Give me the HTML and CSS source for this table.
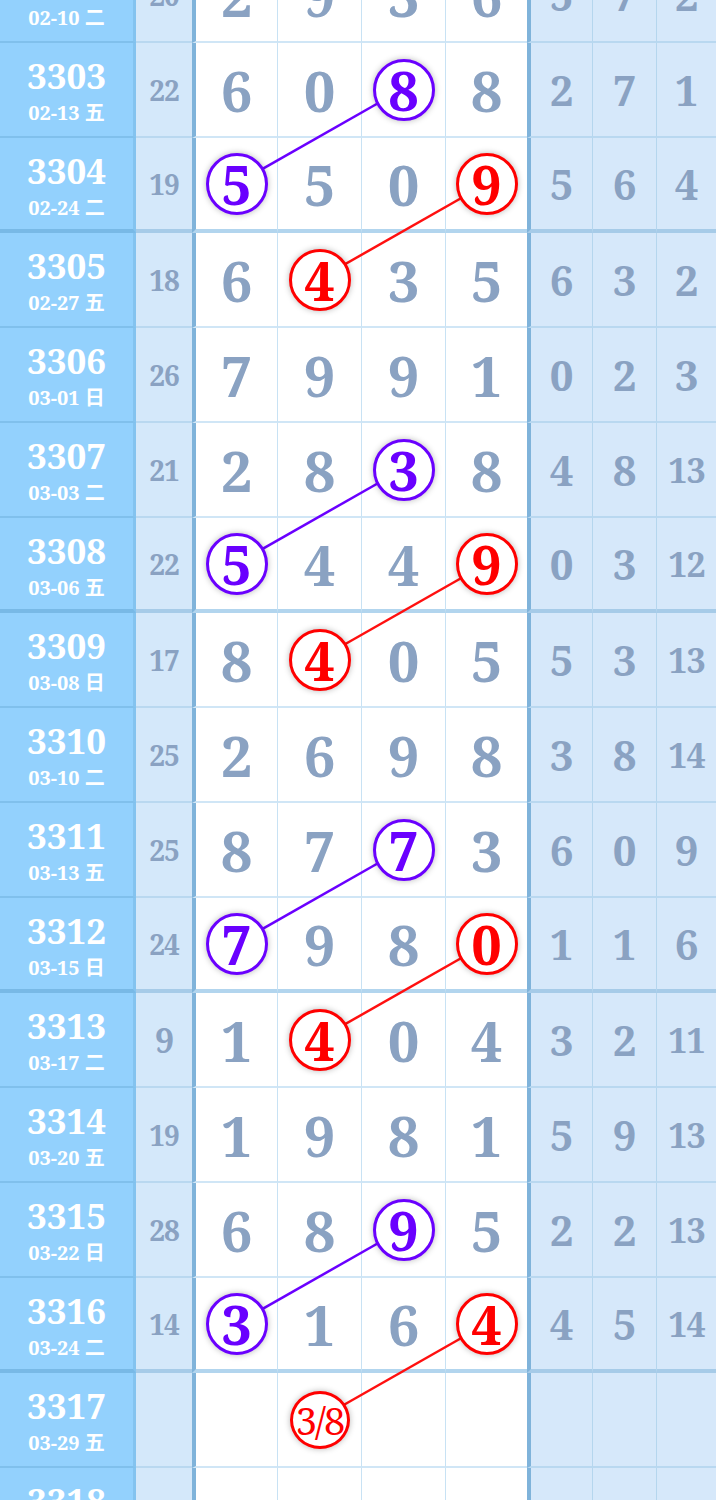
FILE: index.html
```html
<!DOCTYPE html>
<html lang="zh">
<head>
<meta charset="utf-8">
<title>走势图</title>
<link rel="stylesheet" href="styles.css">
</head>
<body>
<div class="chart">
  <svg class="links" width="716" height="1615" viewBox="0 0 716 1615">
    <line class="lp" x1="403" y1="141" x2="236" y2="236"/>
    <line class="lr" x1="486" y1="236" x2="319" y2="331"/>
    <line class="lp" x1="403" y1="521" x2="236" y2="616"/>
    <line class="lr" x1="486" y1="616" x2="319" y2="711"/>
    <line class="lp" x1="403" y1="901" x2="236" y2="996"/>
    <line class="lr" x1="486" y1="996" x2="319" y2="1091"/>
    <line class="lp" x1="403" y1="1281" x2="236" y2="1376"/>
    <line class="lr" x1="486" y1="1376" x2="319" y2="1471"/>
  </svg>

  <div class="row">
    <div class="c-id"><span class="id">3302</span><span class="date">02-10 二</span></div>
    <div class="c-sum">20</div>
    <div class="c-n c1">2</div><div class="c-n">9</div><div class="c-n">3</div><div class="c-n">6</div>
    <div class="c-d d1">5</div><div class="c-d">7</div><div class="c-d">2</div>
  </div>
  <div class="row">
    <div class="c-id"><span class="id">3303</span><span class="date">02-13 五</span></div>
    <div class="c-sum">22</div>
    <div class="c-n c1">6</div><div class="c-n">0</div><div class="c-n"><span class="ball purple">8</span></div><div class="c-n">8</div>
    <div class="c-d d1">2</div><div class="c-d">7</div><div class="c-d">1</div>
  </div>
  <div class="row group-end">
    <div class="c-id"><span class="id">3304</span><span class="date">02-24 二</span></div>
    <div class="c-sum">19</div>
    <div class="c-n c1"><span class="ball purple">5</span></div><div class="c-n">5</div><div class="c-n">0</div><div class="c-n"><span class="ball red">9</span></div>
    <div class="c-d d1">5</div><div class="c-d">6</div><div class="c-d">4</div>
  </div>
  <div class="row">
    <div class="c-id"><span class="id">3305</span><span class="date">02-27 五</span></div>
    <div class="c-sum">18</div>
    <div class="c-n c1">6</div><div class="c-n"><span class="ball red">4</span></div><div class="c-n">3</div><div class="c-n">5</div>
    <div class="c-d d1">6</div><div class="c-d">3</div><div class="c-d">2</div>
  </div>
  <div class="row">
    <div class="c-id"><span class="id">3306</span><span class="date">03-01 日</span></div>
    <div class="c-sum">26</div>
    <div class="c-n c1">7</div><div class="c-n">9</div><div class="c-n">9</div><div class="c-n">1</div>
    <div class="c-d d1">0</div><div class="c-d">2</div><div class="c-d">3</div>
  </div>
  <div class="row">
    <div class="c-id"><span class="id">3307</span><span class="date">03-03 二</span></div>
    <div class="c-sum">21</div>
    <div class="c-n c1">2</div><div class="c-n">8</div><div class="c-n"><span class="ball purple">3</span></div><div class="c-n">8</div>
    <div class="c-d d1">4</div><div class="c-d">8</div><div class="c-d two">13</div>
  </div>
  <div class="row group-end">
    <div class="c-id"><span class="id">3308</span><span class="date">03-06 五</span></div>
    <div class="c-sum">22</div>
    <div class="c-n c1"><span class="ball purple">5</span></div><div class="c-n">4</div><div class="c-n">4</div><div class="c-n"><span class="ball red">9</span></div>
    <div class="c-d d1">0</div><div class="c-d">3</div><div class="c-d two">12</div>
  </div>
  <div class="row">
    <div class="c-id"><span class="id">3309</span><span class="date">03-08 日</span></div>
    <div class="c-sum">17</div>
    <div class="c-n c1">8</div><div class="c-n"><span class="ball red">4</span></div><div class="c-n">0</div><div class="c-n">5</div>
    <div class="c-d d1">5</div><div class="c-d">3</div><div class="c-d two">13</div>
  </div>
  <div class="row">
    <div class="c-id"><span class="id">3310</span><span class="date">03-10 二</span></div>
    <div class="c-sum">25</div>
    <div class="c-n c1">2</div><div class="c-n">6</div><div class="c-n">9</div><div class="c-n">8</div>
    <div class="c-d d1">3</div><div class="c-d">8</div><div class="c-d two">14</div>
  </div>
  <div class="row">
    <div class="c-id"><span class="id">3311</span><span class="date">03-13 五</span></div>
    <div class="c-sum">25</div>
    <div class="c-n c1">8</div><div class="c-n">7</div><div class="c-n"><span class="ball purple">7</span></div><div class="c-n">3</div>
    <div class="c-d d1">6</div><div class="c-d">0</div><div class="c-d">9</div>
  </div>
  <div class="row group-end">
    <div class="c-id"><span class="id">3312</span><span class="date">03-15 日</span></div>
    <div class="c-sum">24</div>
    <div class="c-n c1"><span class="ball purple">7</span></div><div class="c-n">9</div><div class="c-n">8</div><div class="c-n"><span class="ball red">0</span></div>
    <div class="c-d d1">1</div><div class="c-d">1</div><div class="c-d">6</div>
  </div>
  <div class="row">
    <div class="c-id"><span class="id">3313</span><span class="date">03-17 二</span></div>
    <div class="c-sum one">9</div>
    <div class="c-n c1">1</div><div class="c-n"><span class="ball red">4</span></div><div class="c-n">0</div><div class="c-n">4</div>
    <div class="c-d d1">3</div><div class="c-d">2</div><div class="c-d two">11</div>
  </div>
  <div class="row">
    <div class="c-id"><span class="id">3314</span><span class="date">03-20 五</span></div>
    <div class="c-sum">19</div>
    <div class="c-n c1">1</div><div class="c-n">9</div><div class="c-n">8</div><div class="c-n">1</div>
    <div class="c-d d1">5</div><div class="c-d">9</div><div class="c-d two">13</div>
  </div>
  <div class="row">
    <div class="c-id"><span class="id">3315</span><span class="date">03-22 日</span></div>
    <div class="c-sum">28</div>
    <div class="c-n c1">6</div><div class="c-n">8</div><div class="c-n"><span class="ball purple">9</span></div><div class="c-n">5</div>
    <div class="c-d d1">2</div><div class="c-d">2</div><div class="c-d two">13</div>
  </div>
  <div class="row group-end">
    <div class="c-id"><span class="id">3316</span><span class="date">03-24 二</span></div>
    <div class="c-sum">14</div>
    <div class="c-n c1"><span class="ball purple">3</span></div><div class="c-n">1</div><div class="c-n">6</div><div class="c-n"><span class="ball red">4</span></div>
    <div class="c-d d1">4</div><div class="c-d">5</div><div class="c-d two">14</div>
  </div>
  <div class="row">
    <div class="c-id"><span class="id">3317</span><span class="date">03-29 五</span></div>
    <div class="c-sum"></div>
    <div class="c-n c1"></div><div class="c-n"><span class="ball red guess">3/8</span></div><div class="c-n"></div><div class="c-n"></div>
    <div class="c-d d1"></div><div class="c-d"></div><div class="c-d"></div>
  </div>
  <div class="row">
    <div class="c-id"><span class="id">3318</span></div>
    <div class="c-sum"></div>
    <div class="c-n c1"></div><div class="c-n"></div><div class="c-n"></div><div class="c-n"></div>
    <div class="c-d d1"></div><div class="c-d"></div><div class="c-d"></div>
  </div>
</div>
</body>
</html>
```

FILE: styles.css
```css
html, body {
  margin: 0;
  padding: 0;
  background: #ffffff;
  overflow: hidden;
}

body {
  width: 716px;
  height: 1500px;
  font-family: "Noto Serif", "DejaVu Serif", "Noto Sans CJK SC", serif;
}

.chart {
  position: relative;
  width: 716px;
  margin-top: -52px;
}

.links {
  position: absolute;
  left: 0;
  top: 0;
  z-index: 1;
  pointer-events: none;
}

.links line {
  stroke-width: 2.5;
}

.links .lp { stroke: #6a00ff; }
.links .lr { stroke: #ff1010; }

.row {
  display: grid;
  grid-template-columns: 136px 56px 85px 84px 84px 82px 65px 64px 60px;
  height: 95px;
}

.row > div {
  box-sizing: border-box;
  display: flex;
  align-items: center;
  justify-content: center;
  font-weight: bold;
  border-bottom: 2px solid #d0e6f6;
}

.row.group-end > div {
  border-bottom: 4px solid #b2d5ee;
}

.c-id {
  background: #93d1fd;
  border-right: 3px solid #84c3ef;
  flex-direction: column;
  justify-content: flex-start !important;
  padding-top: 14px;
  color: #ffffff;
}

.row > .c-id {
  border-bottom-color: #80c0ec;
}

.row.group-end > .c-id {
  border-bottom-color: #78b9e6;
}

.c-id .id {
  font-size: 35px;
  line-height: 38px;
}

.c-id .date {
  margin-top: 6px;
  font-size: 20px;
  line-height: 24px;
}

.c-sum {
  background: #d4e8fa;
  color: #8aa2c2;
  font-size: 28px;
  letter-spacing: -1px;
}

.row > .c-sum,
.row > .c-d {
  border-bottom-color: #b9d8f0;
}

.row.group-end > .c-sum,
.row.group-end > .c-d {
  border-bottom-color: #a6cbe8;
}

.c-sum.one {
  font-size: 34px;
}

.c-n {
  background: #ffffff;
  color: #8aa2c2;
  font-size: 56px;
  border-left: 1px solid #c8e2f4;
}

.c-n.c1 {
  border-left: 4px solid #7fb3da;
}

.c-d {
  background: #d6e8fa;
  color: #8aa2c2;
  font-size: 42px;
  border-left: 1px solid #b5d6ee;
}

.c-d.d1 {
  border-left: 4px solid #7fb3da;
}

.c-d.two {
  font-size: 34px;
  letter-spacing: -1px;
}

.ball {
  position: relative;
  z-index: 2;
  width: 62px;
  height: 62px;
  box-sizing: border-box;
  border-radius: 50%;
  border: 3px solid;
  background: #ffffff;
  display: flex;
  align-items: center;
  justify-content: center;
  box-shadow: 0 0 6px rgba(0, 0, 0, 0.28);
  font-size: 54px;
  line-height: 1;
}

.ball.purple {
  color: #6a00ff;
  border-color: #6a00ff;
}

.ball.red {
  color: #ff0000;
  border-color: #ff0000;
}

.ball.guess {
  width: 60px;
  height: 58px;
  font-size: 38px;
  font-weight: normal;
  letter-spacing: -2px;
}
```
